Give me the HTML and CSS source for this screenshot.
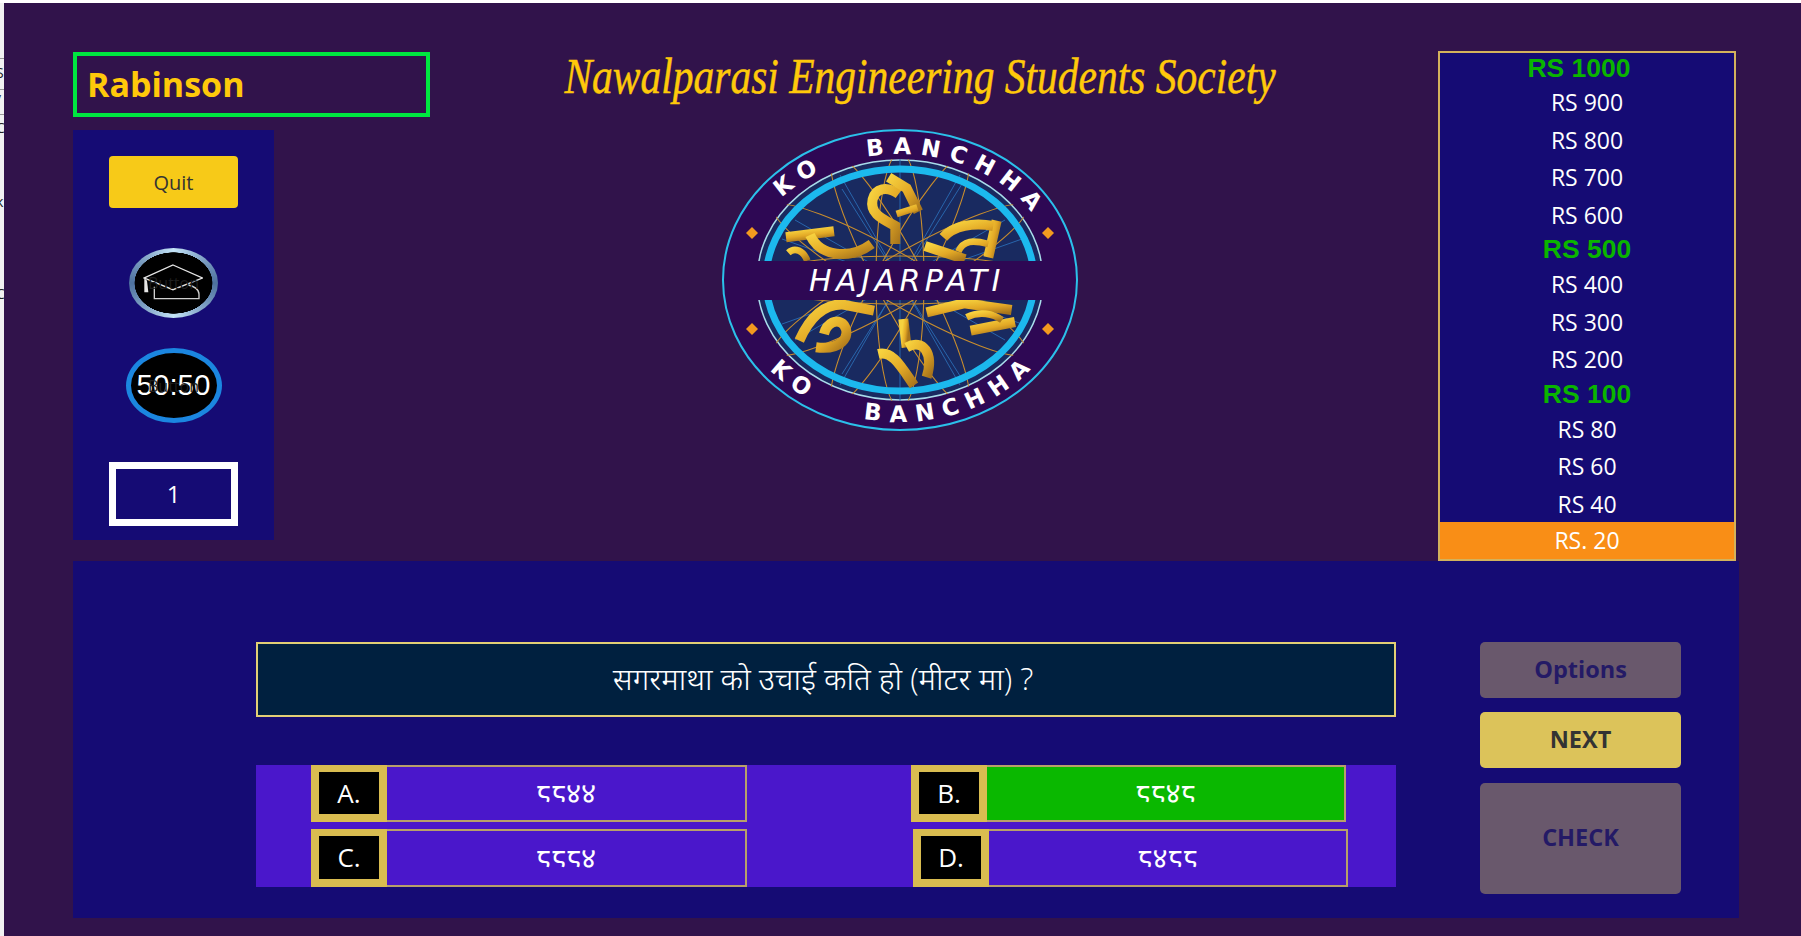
FILE: index.html
```html
<!DOCTYPE html>
<html lang="ne">
<head>
<meta charset="utf-8">
<title>Ko Bancha Hajarpati</title>
<link rel="stylesheet" href="styles.css">
</head>
<body>
<div class="page">
  <div class="edge">
    <span class="edge-line edge-a"></span>
    <span class="edge-mark edge-b">S</span>
    <span class="edge-line edge-c"></span>
    <span class="edge-mark edge-d">/</span>
    <span class="edge-line edge-e"></span>
    <span class="edge-mark edge-f">C</span>
    <span class="edge-mark edge-g">k</span>
    <span class="edge-mark edge-h">C</span>
  </div>
  <main class="stage">
    <section class="top">
      <div class="left">
        <div class="name">Rabinson</div>
        <div class="life">
          <button class="quit">Quit</button>
          <button class="grad">
            <svg class="grad-icon" viewBox="250 100 180 108" aria-hidden="true">
              <path d="M340 103 428 142 340 177 254 142Z" fill="none" stroke="#e6e6e6" stroke-width="4"/>
              <path d="M254 142V185H266L262 150Z" fill="#e6e6e6"/>
              <path d="M284 168V204H418V190C418 176 402 166 386 163" fill="none" stroke="#cfcfcf" stroke-width="4"/>
            </svg>
            <span class="ghost">Button</span>
          </button>
          <button class="fifty">
            <span class="fifty-text">50:50</span>
            <span class="ghost">Button</span>
          </button>
          <div class="count">1</div>
        </div>
      </div>
      <div class="centre">
        <h1 class="title">Nawalparasi Engineering Students Society</h1>
        <svg class="logo" viewBox="0 0 356 302" role="img" aria-label="Ko Bancha Hajarpati logo">
          <defs>
            <linearGradient id="gold" x1="0" y1="0" x2="1" y2="1">
              <stop offset="0" stop-color="#f7d23f"/>
              <stop offset=".55" stop-color="#e3a926"/>
              <stop offset="1" stop-color="#a8751c"/>
            </linearGradient>
            <path id="arcTop" d="M22 151A156 126 0 0 1 334 151"/>
            <path id="arcBottom" d="M10 151A168 142 0 0 0 346 151"/>
            <clipPath id="wheel"><ellipse cx="178" cy="151" rx="145" ry="121"/></clipPath>
          </defs>
          <ellipse cx="178" cy="151" rx="177" ry="150" fill="#2e0854" stroke="#2bc0ea" stroke-width="2"/>
          <ellipse cx="178" cy="151" rx="143" ry="120" fill="#192a60" stroke="#a8dcea" stroke-width="1.5"/>
          <g stroke="#2a6cb4" stroke-width=".9">
            <path d="M178 151 178 30M178 151 238 46M178 151 283 91M178 151 322 151M178 151 283 211M178 151 238 256M178 151 178 272M178 151 118 256M178 151 73 211M178 151 34 151M178 151 73 91M178 151 118 46"/>
            <path d="M120 60 240 250M240 55 120 245M60 110 300 195M60 195 300 110"/>
          </g>
          <g fill="none" stroke="#c88d2d" stroke-width="1.1" clip-path="url(#wheel)">
            <ellipse cx="178" cy="151" rx="148" ry="24" transform="rotate(0 178 151)"/>
            <ellipse cx="178" cy="151" rx="145" ry="24" transform="rotate(30 178 151)"/>
            <ellipse cx="178" cy="151" rx="140" ry="24" transform="rotate(62 178 151)"/>
            <ellipse cx="178" cy="151" rx="128" ry="24" transform="rotate(90 178 151)"/>
            <ellipse cx="178" cy="151" rx="140" ry="24" transform="rotate(118 178 151)"/>
            <ellipse cx="178" cy="151" rx="145" ry="24" transform="rotate(150 178 151)"/>
          </g>
          <ellipse cx="178" cy="151" rx="134" ry="111" fill="none" stroke="#1cb9ee" stroke-width="7"/>
          <g transform="translate(-12 -9) scale(.3333)" fill="none" stroke="url(#gold)" stroke-width="30" stroke-linejoin="miter">
            <path d="M498 372H636"/>
            <path d="M556 372V318C520 298 478 282 488 238 496 205 530 196 566 222"/>
            <path d="M536 172 590 205 625 275"/>
            <path stroke-width="20" d="M560 282 622 262"/>
            <path d="M645 378 765 418"/>
            <path d="M860 302 835 412"/>
            <path d="M700 352C730 318 790 306 850 318"/>
            <path stroke-width="20" d="M745 395C760 360 790 360 835 372"/>
            <path d="M228 352 372 334"/>
            <path d="M300 345C330 410 420 420 485 372"/>
            <path stroke-width="20" d="M235 398C255 380 280 392 292 422"/>
            <path d="M492 572 400 554C345 552 300 590 268 662"/>
            <path d="M318 682C392 692 425 650 402 615 382 592 350 610 342 642"/>
            <path d="M508 597H642"/>
            <path d="M580 597 590 682"/>
            <path d="M505 702C548 692 572 738 612 796"/>
            <path d="M590 682C640 655 672 700 650 772"/>
            <path d="M650 577 762 550 905 570"/>
            <path d="M782 632 915 606"/>
            <path stroke-width="20" d="M770 592C810 572 850 582 876 600"/>
          </g>
          <path d="M8 132H351V171H8Z" fill="#2e0854"/>
          <g fill="#f39a1f">
            <path d="M30 98 36 104 30 110 24 104Z"/>
            <path d="M326 98 332 104 326 110 320 104Z"/>
            <path d="M30 194 36 200 30 206 24 200Z"/>
            <path d="M326 194 332 200 326 206 320 200Z"/>
          </g>
          <text class="logo-ring"><textPath href="#arcTop" startOffset="27%" text-anchor="middle">KO</textPath></text>
          <text class="logo-ring"><textPath href="#arcTop" startOffset="64%" text-anchor="middle">BANCHHA</textPath></text>
          <text class="logo-ring"><textPath href="#arcBottom" startOffset="26%" text-anchor="middle">KO</textPath></text>
          <text class="logo-ring"><textPath href="#arcBottom" startOffset="62%" text-anchor="middle">BANCHHA</textPath></text>
          <text class="logo-band" x="185" y="162" text-anchor="middle">HAJARPATI</text>
        </svg>
      </div>
      <ol class="ladder">
        <li class="rung rung-top">RS 1000</li>
        <li class="rung">RS 900</li>
        <li class="rung">RS 800</li>
        <li class="rung">RS 700</li>
        <li class="rung">RS 600</li>
        <li class="rung rung-safe">RS 500</li>
        <li class="rung">RS 400</li>
        <li class="rung">RS 300</li>
        <li class="rung">RS 200</li>
        <li class="rung rung-safe">RS 100</li>
        <li class="rung">RS 80</li>
        <li class="rung">RS 60</li>
        <li class="rung">RS 40</li>
        <li class="rung rung-now">RS. 20</li>
      </ol>
    </section>
    <section class="bottom">
      <div class="play">
        <div class="question">सगरमाथा को उचाई कति हो (मीटर मा) ?</div>
        <div class="answers">
          <div class="answer-row">
            <div class="answer answer-a"><span class="tag"><b class="letter">A.</b></span><span class="value">८८४४</span></div>
            <div class="answer answer-b"><span class="tag"><b class="letter">B.</b></span><span class="value">८८४८</span></div>
          </div>
          <div class="answer-row">
            <div class="answer answer-a"><span class="tag"><b class="letter">C.</b></span><span class="value">८८८४</span></div>
            <div class="answer answer-d"><span class="tag"><b class="letter">D.</b></span><span class="value">८४८८</span></div>
          </div>
        </div>
      </div>
      <div class="actions">
        <button class="action action-off">Options</button>
        <button class="action action-on">NEXT</button>
        <button class="action action-off action-tall">CHECK</button>
      </div>
    </section>
  </main>
</div>
</body>
</html>
```
FILE: styles.css
```css
* { box-sizing: border-box; }
html, body { margin: 0; height: 100%; }
body { background: #fff; font-family: "Open Sans", "Noto Sans", "Noto Sans Devanagari", sans-serif; overflow: hidden; }
button { font-family: inherit; border: 0; padding: 0; cursor: pointer; }

.page { width: 1801px; height: 936px; display: flex; padding-top: 3px; background: #fff; }

.edge { width: 4px; height: 933px; display: flex; flex-direction: column; overflow: hidden; background: #f1f1f1; color: #222; font-size: 14px; line-height: 16px; }
.edge-line { display: block; flex: none; height: 1px; background: #999; }
.edge-mark { display: block; flex: none; height: 16px; text-indent: -4px; white-space: nowrap; }
.edge-a { margin-top: 55px; }
.edge-b { margin-top: 6px; }
.edge-c { margin-top: 8px; }
.edge-d { margin-top: 2px; }
.edge-e { margin-top: 6px; }
.edge-f { margin-top: 5px; }
.edge-g { margin-top: 58px; }
.edge-h { margin-top: 76px; }

.stage { width: 1797px; height: 933px; background: #31134b; padding: 48px 0 0 69px; }

.top { display: flex; width: 1663px; height: 510px; }
.left { width: 357px; padding-top: 1px; flex: none; }
.name { height: 65px; border: 4px solid #00e640; color: #ffc90a; font-size: 34px; font-weight: 700; line-height: 57px; padding-left: 10px; }
.life { width: 201px; height: 410px; margin-top: 13px; background: #150b74; display: flex; flex-direction: column; align-items: center; padding-top: 26px; }
.quit { width: 129px; height: 52px; background: #f7ca18; color: #333; border-radius: 4px; font-size: 20px; }
.grad { position: relative; width: 89px; height: 70px; margin-top: 40px; border-radius: 50%; background: radial-gradient(closest-side, #000 87%, transparent 88%), conic-gradient(#c4e4f8, #4d719f 25%, #c4e4f8 50%, #4d719f 75%, #c4e4f8); }
.grad-icon { position: absolute; left: 14px; top: 16px; width: 60px; height: 36px; }
.ghost { position: relative; font-size: 16px; color: #1e1e1e; }
.fifty { position: relative; width: 96px; height: 75px; margin-top: 30px; border-radius: 50%; border: 5px solid #1b86e0; background: #000; }
.fifty-text { position: absolute; left: 0; right: 0; top: 14px; text-align: center; color: #fff; font: 29.5px/36px "Liberation Sans", sans-serif; }
.count { width: 129px; height: 64px; margin-top: 39px; border: 7px solid #fff; color: #fff; font-size: 24px; line-height: 50px; text-align: center; }

.centre { flex: 1; display: flex; flex-direction: column; align-items: center; }
.title { margin: 0 28px 0 0; height: 78px; color: #ffc90a; font: italic 400 41.5px/42px "Liberation Serif", serif; white-space: nowrap; -webkit-text-stroke: .4px #ffc90a; transform: scaleY(1.2); transform-origin: top center; }
.logo { display: block; width: 356px; height: 302px; margin-right: 68px; }
.logo-ring { font: 700 23px "DejaVu Sans", sans-serif; fill: #fff; letter-spacing: 9px; }
.logo-band { font: italic 400 30px "DejaVu Sans", sans-serif; fill: #fff; letter-spacing: 4.5px; }

.ladder { list-style: none; margin: 0; padding: 0; width: 298px; height: 510px; flex: none; border: 2px solid #d3b25c; background: #150b74; display: flex; flex-direction: column; color: #fff; text-align: center; font-size: 23px; }
.rung { height: 37.5px; line-height: 37.5px; flex: none; padding-top: 1px; }
.rung-safe, .rung-top { height: 32px; padding-top: 0; color: #0ab400; font: 700 26.5px/32px "Liberation Sans", sans-serif; }
.rung-top { height: 30px; line-height: 30px; padding-right: 16px; }
.rung-now { height: 37px; padding-top: 0; background: #f98e16; }

.bottom { display: flex; width: 1666px; height: 357px; background: #150b74; padding: 81px 0 0 183px; }
.play { width: 1140px; flex: none; }
.question { height: 75px; border: 2px solid #e2cf75; background: #00203f; color: #fff; font-size: 31px; font-weight: 300; line-height: 69px; text-align: center; padding-right: 6px; }
.answers { height: 122px; margin-top: 48px; background: #4a17cb; display: flex; flex-direction: column; gap: 7px; padding-left: 55px; }
.answer-row { display: flex; flex: none; }
.answer-row + .answer-row { height: 58px; }
.answer-row:first-child { height: 57px; }
.answer { display: flex; color: #fff; font-size: 29px; }
.answer-a { width: 436px; }
.answer-b { width: 435px; margin-left: 164px; }
.answer-d { width: 435px; margin-left: 166px; }
.tag { flex: none; width: 76px; background: #d9bc50; padding: 7px 8px 8px; display: flex; font-size: 26px; }
.letter { flex: 1; background: #000; color: #fff; font-weight: 400; text-align: center; line-height: 42px; }
.value { flex: 1; border: 1px solid #b8a06a; border-width: 2px 2px 2px 0; text-align: center; line-height: 50px; }
.answer-row + .answer-row .value { line-height: 52px; }
.answer-b .value { background: #0ab800; }

.actions { margin-left: 84px; width: 201px; display: flex; flex-direction: column; gap: 14px; }
.action { height: 56px; border-radius: 5px; font-size: 23.5px; font-weight: 700; flex: none; padding-bottom: 3px; }
.action-off { background: #69586c; color: #241a66; }
.action-on { background: #dcc35a; color: #333; }
.action-tall { height: 111px; margin-top: 1px; }
```
